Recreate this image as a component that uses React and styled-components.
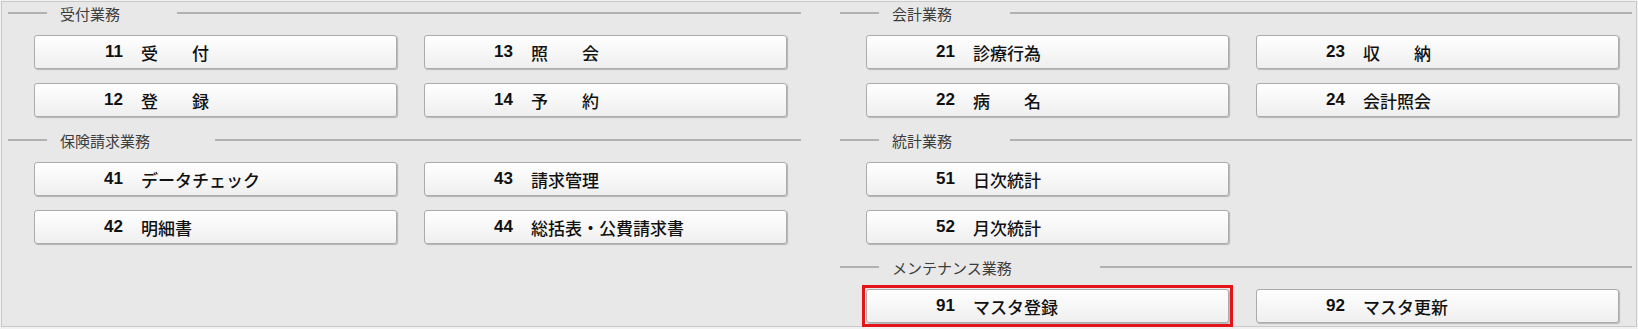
import styled, { createGlobalStyle } from "styled-components";

const Global = createGlobalStyle`
  body {
    margin: 0;
    background: #f2f2f2;
    font-family: "Noto Sans CJK JP", "Noto Sans", sans-serif;
  }
`;

const Panel = styled.div`
  box-sizing: border-box;
  margin: 1px;
  width: 1636px;
  height: 326px;
  border: 1px solid #c9c9c9;
  background: #e8e8e8;
  padding: 0 0 0 6px;
  display: grid;
  grid-template-columns: 793px 792px;
  column-gap: 39px;
  align-items: start;
`;

const Column = styled.div`
  display: flex;
  flex-direction: column;
  gap: 12px;
`;

const Section = styled.section`
  display: flex;
  flex-direction: column;
  gap: 12px;
`;

const Header = styled.div`
  display: flex;
  align-items: center;
  height: 20px;
  margin-top: 1px;
`;

const Rule = styled.div`
  height: 2px;
  background: #b2b2b2;
  width: ${(p) => (p.$grow ? "auto" : "39px")};
  flex: ${(p) => (p.$grow ? "1" : "none")};
`;

const Legend = styled.span`
  box-sizing: border-box;
  width: ${(p) => p.$w}px;
  padding-left: 13px;
  font-size: 15px;
  color: #3c3c3c;
  white-space: nowrap;
`;

const Buttons = styled.div`
  display: grid;
  grid-template-columns: 363px 363px;
  column-gap: 27px;
  row-gap: 14px;
  padding-left: 26px;
`;

const MenuButton = styled.button`
  position: relative;
  box-sizing: border-box;
  height: 34px;
  display: flex;
  align-items: center;
  padding: 0;
  border: 1px solid #ababab;
  border-radius: 3px;
  background: linear-gradient(#ffffff, #efefef);
  box-shadow: 1px 1px 1px rgba(0, 0, 0, 0.22);
  color: #111;
  cursor: pointer;
  grid-column: ${(p) => p.$col || "auto"};

  &::after {
    content: "";
    display: ${(p) => (p.$selected ? "block" : "none")};
    position: absolute;
    inset: -5px -5px -5px -5px;
    border: 3px solid #e4141b;
  }
`;

const Num = styled.span`
  width: 88px;
  text-align: right;
  font-family: "Liberation Sans", Arial, sans-serif;
  font-weight: 700;
  font-size: 17px;
`;

const Label = styled.span`
  margin-left: 18px;
  font-family: "Noto Sans CJK JP", sans-serif;
  font-weight: 500;
  font-size: 17px;
  white-space: pre;
`;

const MenuSection = ({ title, width, items }) => (
  <Section>
    <Header>
      <Rule />
      <Legend $w={width}>{title}</Legend>
      <Rule $grow />
    </Header>
    <Buttons>
      {items.map((it) => (
        <MenuButton key={it.no} $selected={it.selected} $col={it.col}>
          <Num>{it.no}</Num>
          <Label>{it.label}</Label>
        </MenuButton>
      ))}
    </Buttons>
  </Section>
);

export default function App() {
  return (
    <>
      <Global />
      <Panel>
        <Column>
          <MenuSection
            title="受付業務"
            width={130}
            items={[
              { no: "11", label: "受　　付" },
              { no: "13", label: "照　　会" },
              { no: "12", label: "登　　録" },
              { no: "14", label: "予　　約" },
            ]}
          />
          <MenuSection
            title="保険請求業務"
            width={168}
            items={[
              { no: "41", label: "データチェック" },
              { no: "43", label: "請求管理" },
              { no: "42", label: "明細書" },
              { no: "44", label: "総括表・公費請求書" },
            ]}
          />
        </Column>
        <Column>
          <MenuSection
            title="会計業務"
            width={131}
            items={[
              { no: "21", label: "診療行為" },
              { no: "23", label: "収　　納" },
              { no: "22", label: "病　　名" },
              { no: "24", label: "会計照会" },
            ]}
          />
          <MenuSection
            title="統計業務"
            width={131}
            items={[
              { no: "51", label: "日次統計", col: 1 },
              { no: "52", label: "月次統計", col: 1 },
            ]}
          />
          <MenuSection
            title="メンテナンス業務"
            width={221}
            items={[
              { no: "91", label: "マスタ登録", selected: true },
              { no: "92", label: "マスタ更新" },
            ]}
          />
        </Column>
      </Panel>
    </>
  );
}
